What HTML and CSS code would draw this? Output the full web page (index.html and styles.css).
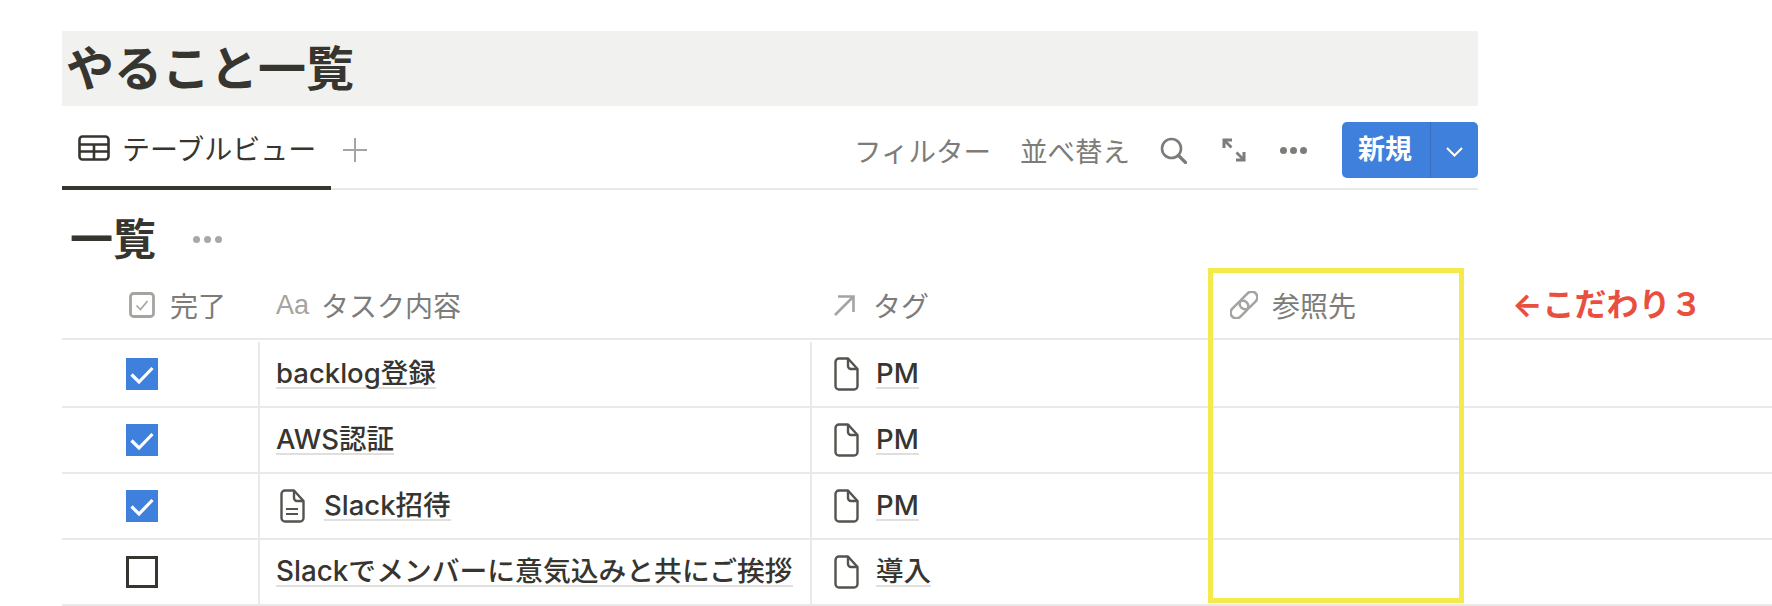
FILE: index.html
```html
<!DOCTYPE html>
<html lang="ja">
<head>
    <meta charset="UTF-8">
    <meta name="viewport" content="width=device-width, initial-scale=1.0">
    <link rel="stylesheet" href="styles.css">
    <title>やること一覧</title>
</head>
<body>
    <svg class="defs" width="0" height="0">
        <symbol id="page" viewBox="0 0 26 34">
            <path d="M6 1.5h9l9.5 10.500V29a3.500 3.500 0 0 1-3.500 3.500H6A3.500 3.500 0 0 1 2.500 29V5A3.500 3.500 0 0 1 6 1.500z" fill="none" stroke="currentColor" stroke-width="2.400" stroke-linejoin="round"/>
            <path d="M15 1.500V9a3 3 0 0 0 3 3h6.500" fill="none" stroke="currentColor" stroke-width="2.400"/>
        </symbol>
        <symbol id="check" viewBox="0 0 32 32">
            <path d="M5.500 16.500l7.500 7.500L26.500 10" fill="none" stroke="#fff" stroke-width="3.200"/>
        </symbol>
    </svg>

    <div class="page">
        <h1 class="title">やること一覧</h1>

        <div class="toolbar">
            <div class="tab">
                <svg class="tab-icon" viewBox="0 0 32 26">
                    <rect x="1.500" y="1.500" width="29" height="23" rx="3" fill="none" stroke="currentColor" stroke-width="2.600"/>
                    <path d="M1.500 9.500h29M1.500 16.500h29M16 9.500v15" fill="none" stroke="currentColor" stroke-width="2.600"/>
                </svg>
                <span>テーブルビュー</span>
            </div>
            <svg class="add-icon" viewBox="0 0 24 24">
                <path d="M12 0v24M0 12h24" fill="none" stroke="currentColor" stroke-width="2"/>
            </svg>
            <div class="actions">
                <span class="action">フィルター</span>
                <span class="action sort">並べ替え</span>
                <svg class="search-icon" viewBox="0 0 27 27">
                    <circle cx="11.500" cy="11.500" r="9.500" fill="none" stroke="currentColor" stroke-width="2.600"/>
                    <path d="M18.500 18.500l7 7" fill="none" stroke="currentColor" stroke-width="3.200" stroke-linecap="round"/>
                </svg>
                <svg class="expand-icon" viewBox="0 0 24 24">
                    <path d="M3 3l6.500 6.500M14.500 14.500L21 21" fill="none" stroke="currentColor" stroke-width="2.800"/>
                    <path d="M2 10V2h8M22 14v8h-8" fill="none" stroke="currentColor" stroke-width="3"/>
                </svg>
                <div class="dots dark"><i></i><i></i><i></i></div>
                <div class="new-button">
                    <span class="new-label">新規</span>
                    <span class="new-arrow">
                        <svg viewBox="0 0 17 10" width="17" height="10">
                            <path d="M1 1l7.500 7.500L16 1" fill="none" stroke="#fff" stroke-width="2"/>
                        </svg>
                    </span>
                </div>
            </div>
        </div>

        <div class="section">
            <h2 class="section-title">一覧</h2>
            <div class="dots"><i></i><i></i><i></i></div>
        </div>

        <div class="table">
            <div class="row head">
                <div class="cell">
                    <svg class="head-check" viewBox="0 0 26 26">
                        <rect x="1.500" y="1.500" width="23" height="23" rx="3" fill="none" stroke="currentColor" stroke-width="2.800"/>
                        <path d="M7.500 13.500l4 4 7-8.500" fill="none" stroke="currentColor" stroke-width="1.600"/>
                    </svg>
                    <span class="head-label">完了</span>
                </div>
                <div class="cell name">
                    <span class="aa">Aa</span>
                    <span class="head-label">タスク内容</span>
                </div>
                <div class="cell tag">
                    <svg class="head-arrow" viewBox="0 0 23 21">
                        <path d="M2 20L20 2M5 1.500h15.500V17" fill="none" stroke="currentColor" stroke-width="2.600"/>
                    </svg>
                    <span class="head-label">タグ</span>
                </div>
                <div class="cell link">
                    <svg class="head-link" viewBox="3 3 22 22">
                        <g transform="rotate(-45 14 14)" fill="none" stroke="currentColor" stroke-width="2">
                            <rect x="1" y="9.500" width="16" height="9" rx="4.500"/>
                            <rect x="11" y="9.500" width="16" height="9" rx="4.500"/>
                        </g>
                    </svg>
                    <span class="head-label">参照先</span>
                </div>
                <div class="note">←こだわり３</div>
            </div>

            <div class="row">
                <div class="cell done"><span class="box on"><svg><use href="#check"/></svg></span></div>
                <div class="cell name body"><span class="text">backlog登録</span></div>
                <div class="cell tag body"><svg class="doc"><use href="#page"/></svg><span class="text">PM</span></div>
            </div>
            <div class="row">
                <div class="cell done"><span class="box on"><svg><use href="#check"/></svg></span></div>
                <div class="cell name body"><span class="text">AWS認証</span></div>
                <div class="cell tag body"><svg class="doc"><use href="#page"/></svg><span class="text">PM</span></div>
            </div>
            <div class="row">
                <div class="cell done"><span class="box on"><svg><use href="#check"/></svg></span></div>
                <div class="cell name body">
                    <svg class="doc-lines" viewBox="0 0 26 34">
                        <use href="#page"/>
                        <path d="M7 20h12M7 25h12" fill="none" stroke="currentColor" stroke-width="2"/>
                    </svg>
                    <span class="text">Slack招待</span>
                </div>
                <div class="cell tag body"><svg class="doc"><use href="#page"/></svg><span class="text">PM</span></div>
            </div>
            <div class="row">
                <div class="cell done"><span class="box"></span></div>
                <div class="cell name body"><span class="text long">Slackでメンバーに意気込みと共にご挨拶</span></div>
                <div class="cell tag body"><svg class="doc"><use href="#page"/></svg><span class="text">導入</span></div>
            </div>
        </div>

        <div class="highlight"></div>
    </div>
</body>
</html>
```

FILE: styles.css
```css
* {
    box-sizing: border-box;
}

body {
    margin: 0;
    background-color: #fff;
    color: #37352f;
    font-family: Inter, "Noto Sans CJK JP", sans-serif;
    overflow: hidden;
}

.defs {
    position: absolute;
}

.page {
    position: relative;
    height: 606px;
    padding-top: 31px;
}

.title {
    width: 1416px;
    height: 75px;
    margin: 0 0 0 62px;
    padding-left: 4px;
    background-color: #f1f1ef;
    font-size: 48px;
    font-weight: 700;
    line-height: 75px;
}

/* tabs and buttons */
.toolbar {
    display: flex;
    align-items: center;
    width: 1416px;
    height: 84px;
    margin-left: 62px;
    padding-top: 6px;
    border-bottom: 2px solid #e9e9e7;
}

.tab {
    display: flex;
    align-items: center;
    align-self: stretch;
    width: 269px;
    margin-bottom: -2px;
    padding: 0 0 2px 16px;
    border-bottom: 4px solid #37352f;
    font-size: 28px;
}

.tab-icon {
    width: 32px;
    height: 26px;
    margin-right: 12px;
}

.add-icon {
    width: 24px;
    height: 24px;
    margin-left: 12px;
    color: #a5a4a1;
}

.actions {
    display: flex;
    align-items: center;
    margin-left: auto;
    color: #7d7c78;
}

.action {
    font-size: 27.500px;
}

.sort {
    margin-left: 29px;
}

.search-icon {
    width: 27px;
    height: 27px;
    margin-left: 30px;
}

.expand-icon {
    width: 24px;
    height: 24px;
    margin-left: 35px;
}

.dots {
    display: flex;
    gap: 3px;
    margin-left: 21px;
}

.dots i {
    width: 7px;
    height: 7px;
    border-radius: 50%;
    background-color: #a9a8a5;
}

.dots.dark {
    margin-left: 34px;
}

.dots.dark i {
    background-color: #7d7c78;
}

.new-button {
    display: flex;
    width: 136px;
    height: 56px;
    margin-left: 35px;
    border-radius: 5px;
    background-color: #4080dd;
    color: #fff;
}

.new-label {
    width: 89px;
    padding-left: 16px;
    border-right: 1px solid #3a6fbe;
    font-size: 27px;
    font-weight: 700;
    line-height: 56px;
}

.new-arrow {
    display: flex;
    align-items: center;
    justify-content: center;
    flex: 1;
    padding-top: 4px;
}

/* section heading */
.section {
    display: flex;
    align-items: center;
    height: 74px;
    padding: 24px 0 0 8px;
    margin-left: 62px;
}

.section-title {
    margin: 0;
    font-size: 43px;
    font-weight: 700;
    line-height: 50px;
}

.section .dots {
    gap: 4px;
    margin-left: 37px;
}

/* table */
.table {
    margin-left: 62px;
}

.row {
    display: grid;
    grid-template-columns: 196px 552px 412px 290px 1fr;
    height: 66px;
    border-bottom: 2px solid #e9e9e7;
}

.head {
    height: 76px;
    margin-bottom: 2px;
    padding-top: 4px;
    color: #7d7c78;
    font-size: 28px;
}

.cell {
    display: flex;
    align-items: center;
}

.head .cell:first-child {
    padding-left: 67px;
}

.head .name {
    padding-left: 18px;
}

.head .tag {
    padding-left: 23px;
}

.head .link {
    padding-left: 8px;
}

.head-label {
    white-space: nowrap;
}

.head-check {
    width: 26px;
    height: 26px;
    margin-right: 15px;
    color: #a5a4a1;
}

.aa {
    margin-right: 12px;
    color: #a5a4a1;
    font-family: "Liberation Sans", sans-serif;
    font-size: 27px;
}

.head-arrow {
    width: 23px;
    height: 21px;
    margin-right: 17px;
    color: #a5a4a1;
}

.head-link {
    width: 28px;
    height: 28px;
    margin-right: 14px;
    color: #a5a4a1;
}

.note {
    color: #e94f3f;
    font-size: 32px;
    font-weight: 700;
    line-height: 74px;
    white-space: nowrap;
}

.done {
    padding-left: 64px;
}

.box {
    display: block;
    width: 32px;
    height: 32px;
    border: 3px solid #37352f;
}

.box.on {
    border: 0;
    background-color: #4080dd;
}

.box svg {
    display: block;
    width: 32px;
    height: 32px;
}

.body {
    border-left: 2px solid #e9e9e7;
}

.name.body {
    padding-left: 16px;
}

.tag.body {
    padding-left: 21px;
}

.text {
    border-bottom: 2px solid #dfdfde;
    font-size: 27.500px;
    font-weight: 500;
    line-height: 28px;
    white-space: nowrap;
}

.long {
    font-size: 27.800px;
}

.doc {
    width: 26px;
    height: 34px;
    margin-right: 17px;
    color: #55534e;
}

.doc-lines {
    width: 26px;
    height: 34px;
    margin: 0 19px 0 3px;
    color: #55534e;
}

/* annotation box drawn over the table */
.highlight {
    position: absolute;
    top: 268px;
    left: 1208px;
    width: 256px;
    height: 335px;
    border: 5px solid #f4ea4c;
}
```
